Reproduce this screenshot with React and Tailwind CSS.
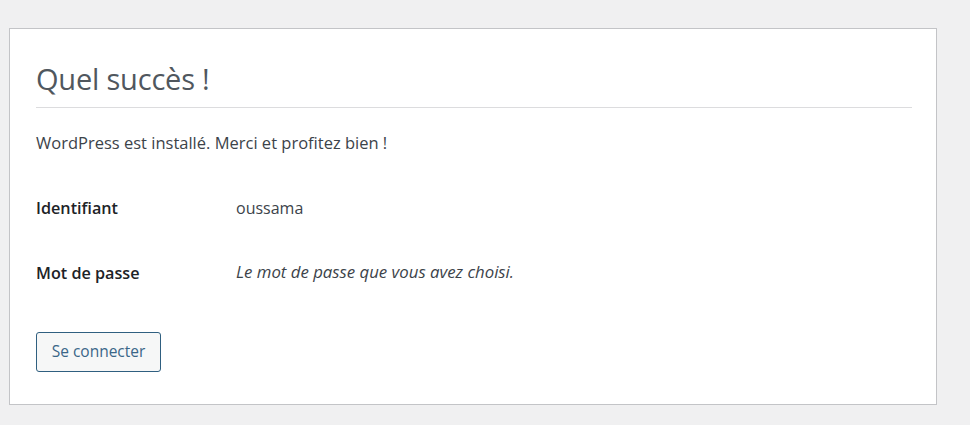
import React from 'react';

const FONT = "font-['Open_Sans','Noto_Sans',sans-serif]";

export default function App() {
  return (
    <div className={`min-h-[425px] w-[970px] bg-[#f0f0f1] pt-[28px] pl-[9px] ${FONT}`}>
      <div className="w-[928px] h-[377px] bg-white border border-[#c3c4c7] px-[26px]">
        {/* titre */}
        <h1 className="mt-[30px] text-[29px] leading-[40px] font-normal text-[#50575e] pb-[8px] border-b border-[#dcdcde] w-[876px] tracking-[-0.2px]">
          Quel succès !
        </h1>

        <p className="mt-[23px] text-[16.5px] leading-[24px] text-[#3c434a]">
          WordPress est installé. Merci et profitez bien !
        </p>

        <div className="mt-[41px] flex flex-col gap-[40px]">
          <div className="flex items-center h-[24px]">
            <span className="w-[200px] text-[16.2px] font-semibold text-[#1d2327]">Identifiant</span>
            <span className="text-[16px] text-[#3c434a]">oussama</span>
          </div>
          <div className="flex items-center h-[24px]">
            <span className="w-[200px] text-[16.2px] font-semibold text-[#1d2327] mt-[2px]">Mot de passe</span>
            <span className="text-[16.8px] italic text-[#3c434a]">Le mot de passe que vous avez choisi.</span>
          </div>
        </div>

        <button className="mt-[48px] h-[40px] w-[125px] rounded-[3px] border border-[#2f5f80] bg-[#f6f7f7] text-[15.5px] text-[#3a6688]">
          Se connecter
        </button>
      </div>
    </div>
  );
}
